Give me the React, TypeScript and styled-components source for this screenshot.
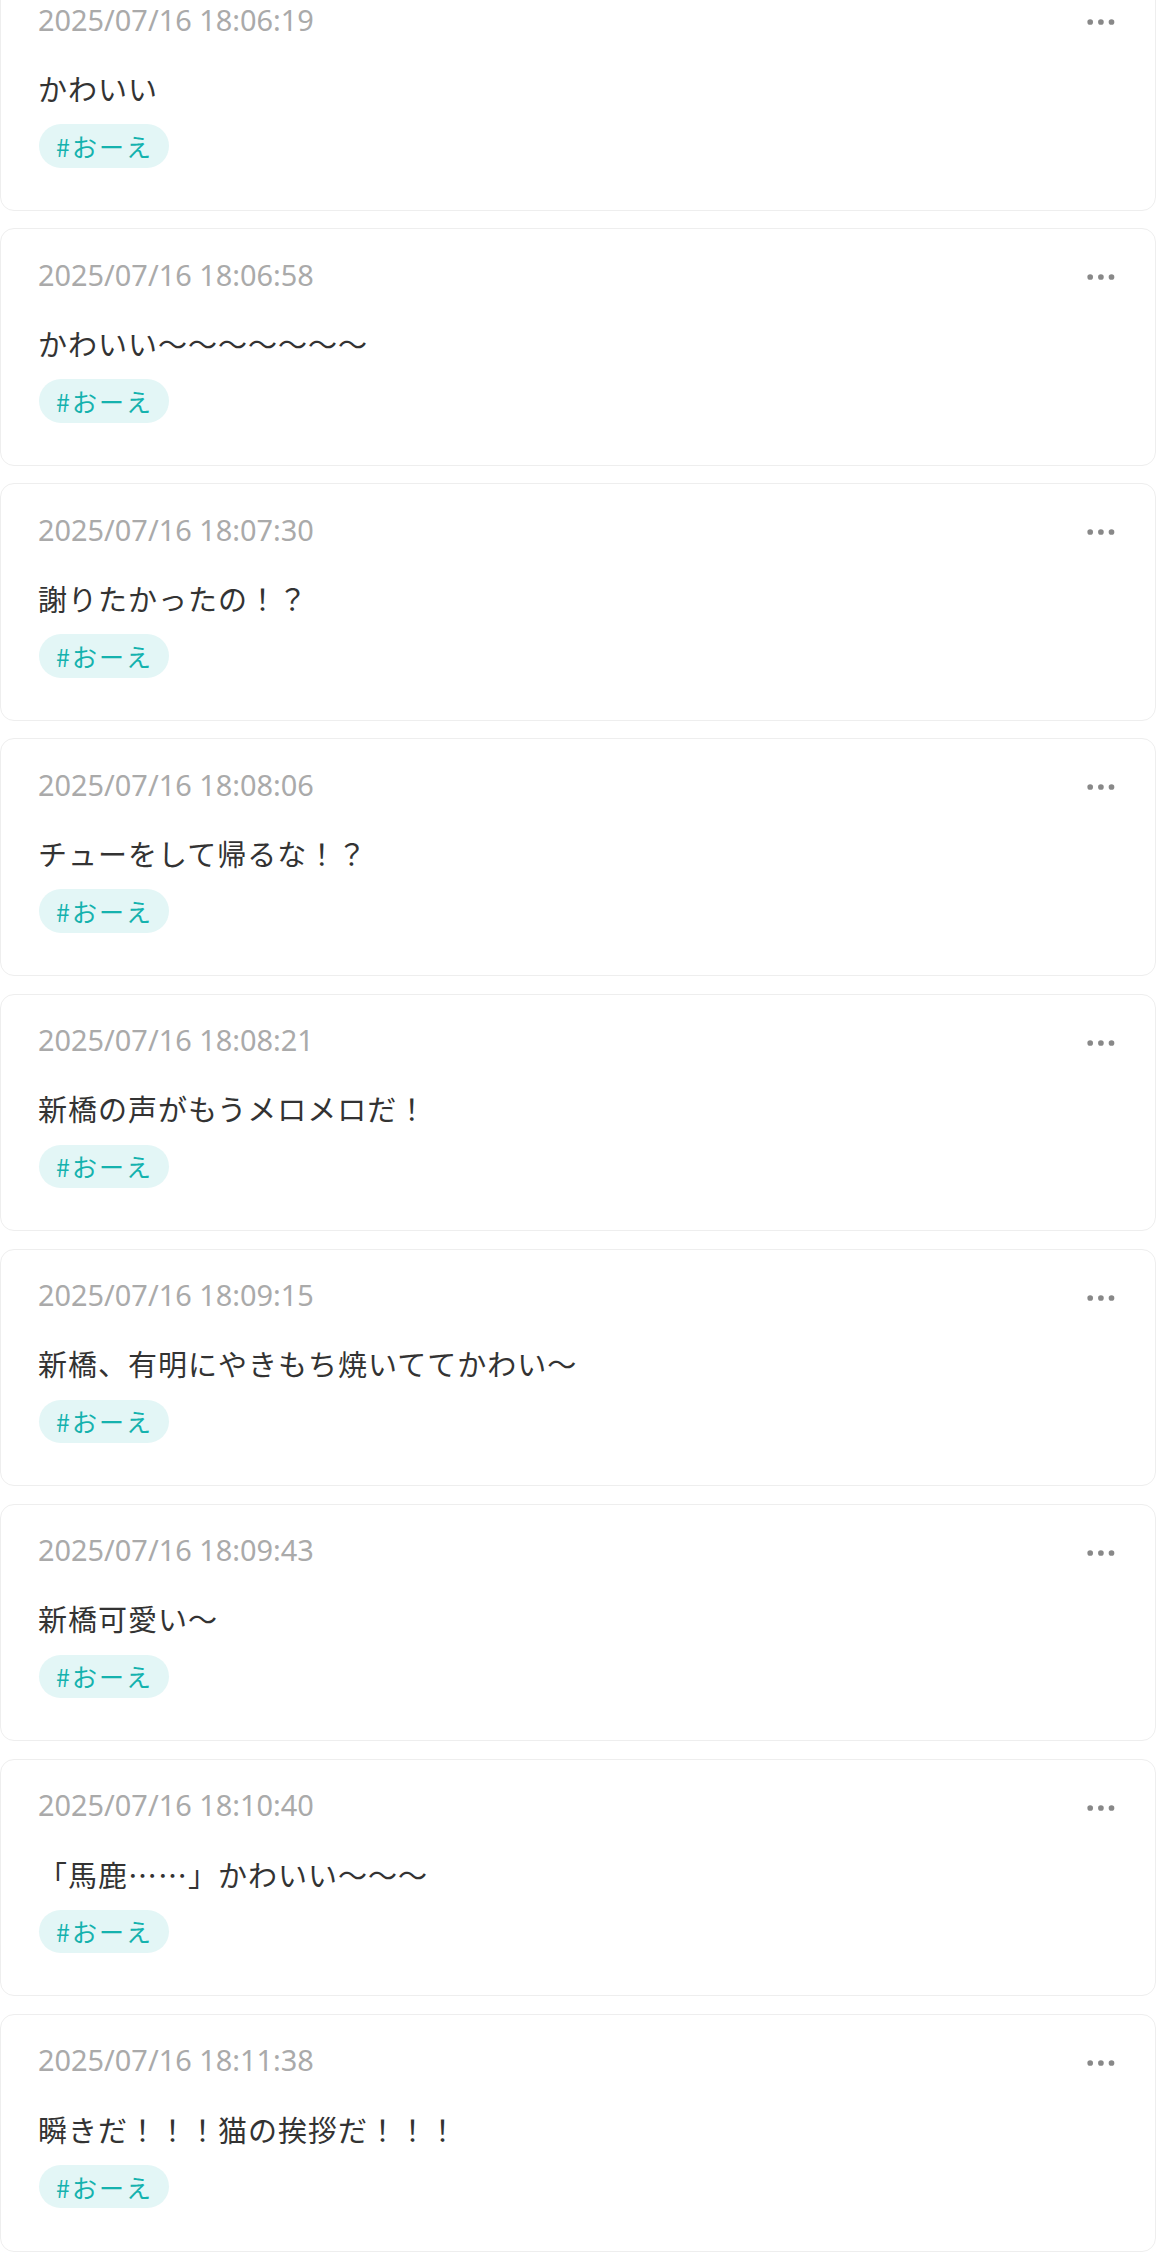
import React from "react";
import styled, { createGlobalStyle } from "styled-components";

const GlobalStyle = createGlobalStyle`
  html, body {
    margin: 0;
    padding: 0;
    background: #ffffff;
  }
  body {
    font-family: "Noto Sans CJK JP", "Noto Sans", sans-serif;
    overflow: hidden;
  }
`;

const List = styled.div`
  display: flex;
  flex-direction: column;
  gap: 17.4px;
  margin-top: -26.8px;
`;

const Card = styled.article`
  box-sizing: border-box;
  width: 100%;
  background: #ffffff;
  border: 1px solid #eeeeee;
  border-radius: 14px;
  padding: 30px 38px 42.3px 37px;
  display: flex;
  flex-direction: column;
`;

const Header = styled.div`
  display: flex;
  align-items: center;
  justify-content: space-between;
  height: 36px;
`;

const Timestamp = styled.time`
  font-family: "Noto Sans", Roboto, "Liberation Sans", sans-serif;
  font-size: 28.9px;
  line-height: 36px;
  margin-bottom: 5px;
  color: #aaaaaa;
`;

const MoreButton = styled.button`
  display: flex;
  align-items: center;
  justify-content: center;
  border: none;
  background: transparent;
  padding: 0;
  cursor: pointer;
  color: #888888;
`;

const Body = styled.p`
  margin: 24.8px 0 0;
  font-size: 29px;
  line-height: 46.4px;
  letter-spacing: 1px;
  color: #333333;
`;

const Tags = styled.div`
  display: flex;
  gap: 10px;
  margin-top: 12.8px;
`;

const Tag = styled.span`
  display: inline-flex;
  align-items: center;
  box-sizing: border-box;
  height: 43.4px;
  padding: 0 16px 0 17px;
  border-radius: 22px;
  background: #e3f6f6;
  color: #15b2ae;
  font-size: 25px;
  letter-spacing: 2px;
  margin-left: 1px;
`;

const Dots = () => (
  <svg width="32" height="8" viewBox="0 0 32 8" aria-hidden="true">
    <circle cx="5.2" cy="4" r="2.85" fill="currentColor" />
    <circle cx="15.9" cy="4" r="2.85" fill="currentColor" />
    <circle cx="26.5" cy="4" r="2.85" fill="currentColor" />
  </svg>
);

type Post = { time: string; text: string; tag: string };

const posts: Post[] = [
  { time: "2025/07/16 18:06:19", text: "かわいい", tag: "#おーえ" },
  { time: "2025/07/16 18:06:58", text: "かわいい〜〜〜〜〜〜〜", tag: "#おーえ" },
  { time: "2025/07/16 18:07:30", text: "謝りたかったの！？", tag: "#おーえ" },
  { time: "2025/07/16 18:08:06", text: "チューをして帰るな！？", tag: "#おーえ" },
  { time: "2025/07/16 18:08:21", text: "新橋の声がもうメロメロだ！", tag: "#おーえ" },
  { time: "2025/07/16 18:09:15", text: "新橋、有明にやきもち焼いててかわい〜", tag: "#おーえ" },
  { time: "2025/07/16 18:09:43", text: "新橋可愛い〜", tag: "#おーえ" },
  { time: "2025/07/16 18:10:40", text: "「馬鹿……」かわいい〜〜〜", tag: "#おーえ" },
  { time: "2025/07/16 18:11:38", text: "瞬きだ！！！猫の挨拶だ！！！", tag: "#おーえ" },
];

export default function App() {
  return (
    <>
      <GlobalStyle />
      <List>
        {posts.map((p) => (
          <Card key={p.time}>
            <Header>
              <Timestamp>{p.time}</Timestamp>
              <MoreButton aria-label="more">
                <Dots />
              </MoreButton>
            </Header>
            <Body>{p.text}</Body>
            <Tags>
              <Tag>{p.tag}</Tag>
            </Tags>
          </Card>
        ))}
      </List>
    </>
  );
}
